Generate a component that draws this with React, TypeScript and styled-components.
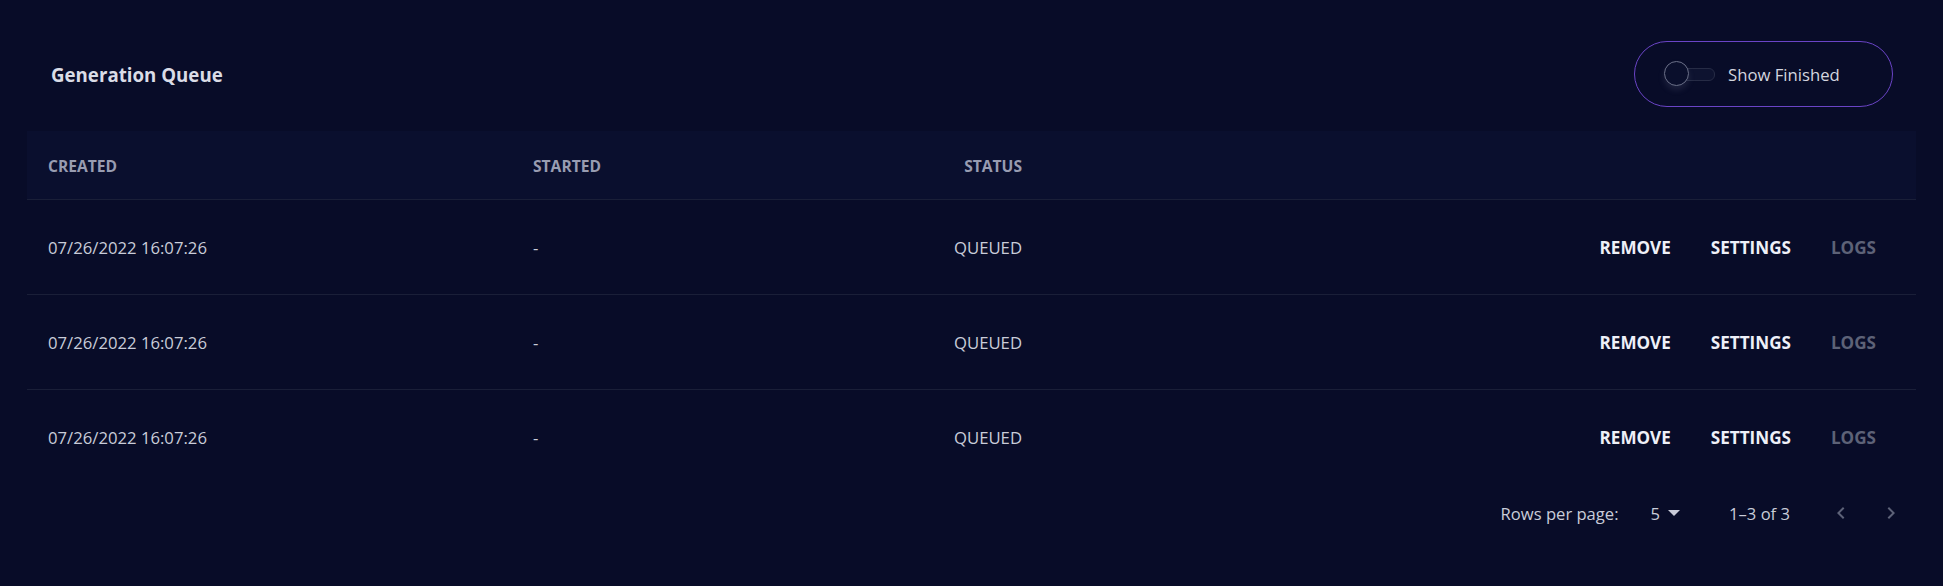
import styled, {createGlobalStyle} from "styled-components";

type Job = {
  id: number;
  created: string;
  started: string;
  status: string;
};

const jobs: Job[] = [
  {id: 1, created: "07/26/2022 16:07:26", started: "-", status: "QUEUED"},
  {id: 2, created: "07/26/2022 16:07:26", started: "-", status: "QUEUED"},
  {id: 3, created: "07/26/2022 16:07:26", started: "-", status: "QUEUED"},
];

const GlobalStyle = createGlobalStyle`
  html, body {
    margin: 0;
    background: #080c28;
  }
  body {
    font-family: "Open Sans", "Noto Sans", sans-serif;
    color: #c9ccd9;
  }
`;

const Page = styled.div`
  width: 1943px;
  height: 586px;
  box-sizing: border-box;
  padding: 0 27px;
  background: #080c28;
`;

const Toolbar = styled.div`
  display: flex;
  align-items: center;
  justify-content: space-between;
  padding: 41px 23px 24px 24px;
`;

const Title = styled.h2`
  margin: 0;
  font-size: 18.7px;
  font-weight: 700;
  color: #dadce6;
`;

const FilterPill = styled.label`
  display: flex;
  align-items: center;
  box-sizing: border-box;
  width: 259px;
  height: 66px;
  padding: 0 0 0 29px;
  border: 1px solid #6a44c6;
  border-radius: 33px;
  cursor: pointer;
`;

const SwitchTrack = styled.span`
  position: relative;
  display: block;
  width: 46px;
  height: 11px;
  margin-left: 3px;
  border-radius: 6px;
  background: #0e1330;
  border: 1px solid #262b45;
`;

const SwitchThumb = styled.span`
  position: absolute;
  left: -4px;
  top: -8px;
  width: 23px;
  height: 23px;
  border-radius: 50%;
  background: #0a0f2c;
  border: 1px solid #6b7088;
  box-shadow: 0 4px 6px rgba(120, 125, 160, 0.18);
`;

const PillText = styled.span`
  margin-left: 13px;
  font-size: 16.7px;
  color: #d3d5df;
`;

const Table = styled.div`
  display: flex;
  flex-direction: column;
`;

const Row = styled.div<{ $head?: boolean; $last?: boolean }>`
  display: grid;
  grid-template-columns: 485px 390px 141px 1fr;
  align-items: center;
  height: ${props => props.$head ? 68 : 94}px;
  background: ${props => props.$head ? "#0a0f2e" : "transparent"};
  border-bottom: 1px solid ${props => props.$last ? "transparent" : "#1a1f38"};
`;

const Cell = styled.div<{ $align?: "left" | "right" }>`
  padding: 0 21px;
  text-align: ${props => props.$align ?? "left"};
  font-size: 16.7px;
  color: #c9ccd9;
`;

const HeadCell = styled(Cell)`
  padding-top: 2px;
  font-size: 15.6px;
  font-weight: 700;
  color: #989cb1;
`;

const Actions = styled.div`
  display: flex;
  justify-content: flex-end;
  gap: 40px;
  padding-right: 40px;
`;

const ActionButton = styled.button<{ $disabled?: boolean }>`
  padding: 0;
  border: 0;
  background: none;
  font-family: inherit;
  font-size: 17.1px;
  font-weight: 700;
  text-transform: uppercase;
  color: ${props => props.$disabled ? "#5d6277" : "#eef0f8"};
  cursor: ${props => props.$disabled ? "default" : "pointer"};
`;

const Pagination = styled.div`
  display: flex;
  align-items: center;
  justify-content: flex-end;
  height: 56px;
  padding-right: 5px;
  font-size: 16.6px;
  color: #c9ccd9;
`;

const RowsSelect = styled.div`
  display: flex;
  align-items: center;
  margin-left: 32px;
  gap: 8px;
`;

const Range = styled.span`
  margin-left: 49px;
`;

const NavButton = styled.button`
  display: flex;
  align-items: center;
  justify-content: center;
  width: 40px;
  height: 40px;
  padding: 0;
  border: 0;
  background: none;
  color: #5d6278;
`;

const NavGroup = styled.div`
  display: flex;
  align-items: center;
  gap: 10px;
  margin-left: 31px;
`;

const Caret = () => (
  <svg width="12" height="6" viewBox="0 0 12 6">
    <path d="M0 0h12L6 6z" fill="#c9ccd9"/>
  </svg>
);

const Chevron = ({dir}: { dir: "left" | "right" }) => (
  <svg width="24" height="24" viewBox="0 0 24 24">
    <path
      d={dir == "left" ? "M15.41 7.41 14 6l-6 6 6 6 1.41-1.41L10.83 12z" : "M8.59 16.59 10 18l6-6-6-6-1.41 1.41L13.17 12z"}
      fill="currentColor"
    />
  </svg>
);

const App = () => {
  return (
    <Page>
      <GlobalStyle/>
      <Toolbar>
        <Title>Generation Queue</Title>
        <FilterPill>
          <SwitchTrack>
            <SwitchThumb/>
          </SwitchTrack>
          <PillText>Show Finished</PillText>
        </FilterPill>
      </Toolbar>
      <Table>
        <Row $head>
          <HeadCell>CREATED</HeadCell>
          <HeadCell>STARTED</HeadCell>
          <HeadCell $align="right">STATUS</HeadCell>
          <div/>
        </Row>
        {jobs.map((job, idx) => (
          <Row key={job.id} $last={idx == jobs.length - 1}>
            <Cell>{job.created}</Cell>
            <Cell>{job.started}</Cell>
            <Cell $align="right">{job.status}</Cell>
            <Actions>
              <ActionButton>Remove</ActionButton>
              <ActionButton>Settings</ActionButton>
              <ActionButton $disabled>Logs</ActionButton>
            </Actions>
          </Row>
        ))}
      </Table>
      <Pagination>
        <span>Rows per page:</span>
        <RowsSelect>
          <span>5</span>
          <Caret/>
        </RowsSelect>
        <Range>1–3 of 3</Range>
        <NavGroup>
          <NavButton><Chevron dir="left"/></NavButton>
          <NavButton><Chevron dir="right"/></NavButton>
        </NavGroup>
      </Pagination>
    </Page>
  );
};

export default App;
